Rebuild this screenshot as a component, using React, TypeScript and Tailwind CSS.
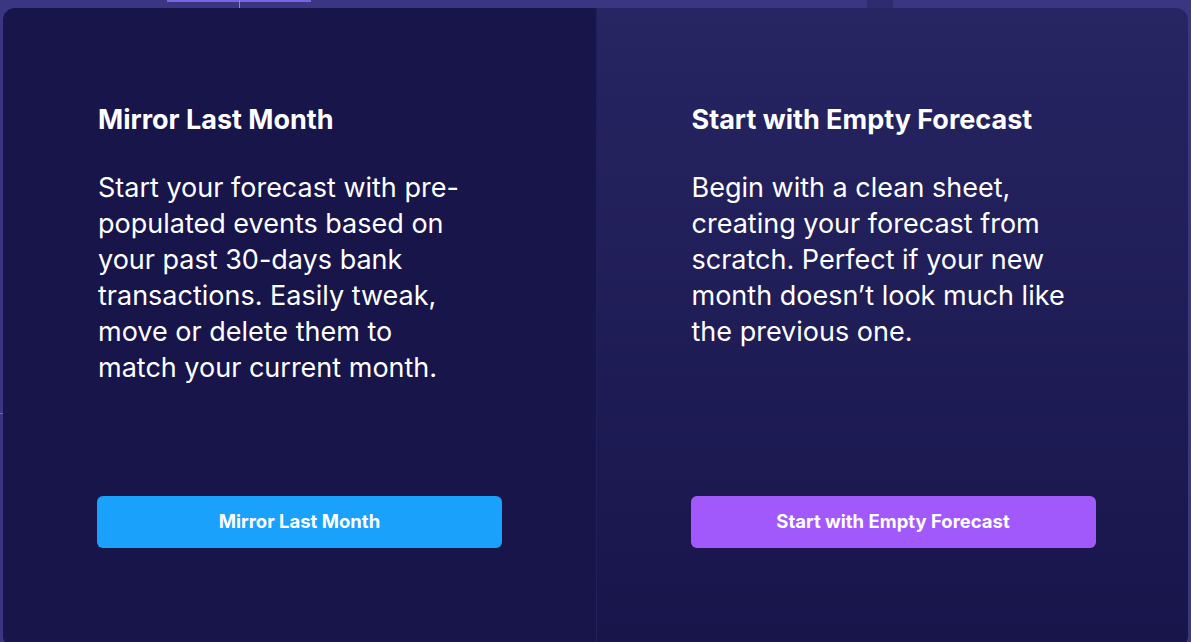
import React from "react";

export default function App() {
  return (
    <div
      className="relative w-[1191px] h-[642px] overflow-hidden bg-[#3a3682]"
      style={{ fontFamily: "Inter, 'Noto Sans', sans-serif" }}
    >
      {/* background grid hints */}
      <div className="absolute left-[167px] top-0 h-[2px] w-[144px] bg-[#7b63e6]" />
      <div className="absolute left-[239px] top-0 h-[9px] w-px bg-[#8e7cf0]" />
      <div className="absolute left-[867px] top-0 h-[9px] w-[26px] bg-[#2e2b6e]" />
      <div className="absolute left-0 top-[413px] h-px w-[3px] bg-[#6f5fe0]" />

      <div className="absolute left-[3px] top-[8px] w-[1185px] h-[640px] rounded-[12px] overflow-hidden grid grid-cols-2">
        <div className="bg-[#18154b] flex flex-col justify-between pl-[94px] pt-[96px] pb-[100px]">
          <div className="ml-px">
            <h2 className="text-[27px] leading-[32px] font-bold text-white">Mirror Last Month</h2>
            <p className="mt-[34px] w-[371px] text-[27px] leading-[36px] text-white">
              Start your forecast with pre-populated events based on your past 30-days bank transactions. Easily tweak, move or delete them to match your current month.
            </p>
          </div>
          <button className="w-[405px] h-[52px] rounded-[6px] bg-[#1aa1fb] text-white text-[18.5px] font-bold">
            Mirror Last Month
          </button>
        </div>
        <div className="bg-gradient-to-b from-[#272562] to-[#18154b] border-l border-[#221f5a] flex flex-col justify-between pl-[94px] pt-[96px] pb-[100px]">
          <div className="ml-px">
            <h2 className="text-[27px] leading-[32px] font-bold text-white">Start with Empty Forecast</h2>
            <p className="mt-[34px] w-[385px] text-[27px] leading-[36px] text-white">
              Begin with a clean sheet, creating your forecast from scratch. Perfect if your new month doesn’t look much like the previous one.
            </p>
          </div>
          <button className="w-[405px] h-[52px] rounded-[6px] bg-[#a259fb] text-white text-[18.5px] font-bold">
            Start with Empty Forecast
          </button>
        </div>
      </div>
    </div>
  );
}
